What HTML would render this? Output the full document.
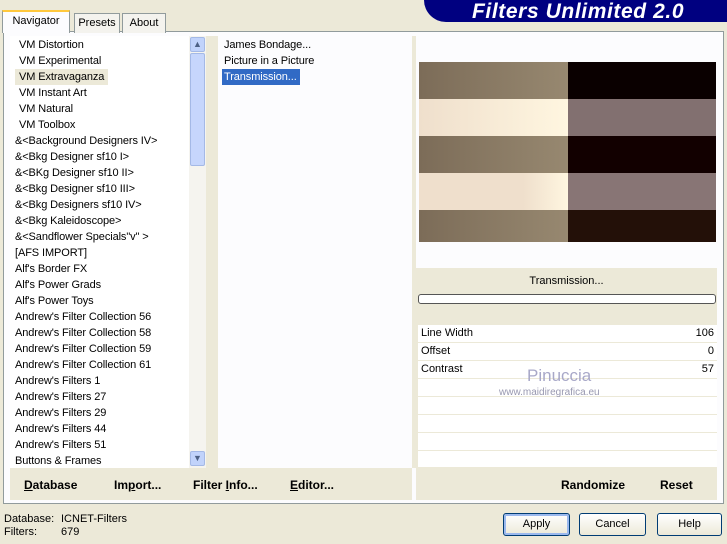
<!DOCTYPE html>
<html><head><style>
*{margin:0;padding:0;box-sizing:border-box}
body{width:727px;height:544px;background:#ece9d8;font-family:"Liberation Sans",sans-serif;font-size:11px;color:#000;position:relative;overflow:hidden}
.abs{position:absolute}
.tab{position:absolute;top:12px;height:20px;border:1px solid #919b9c;border-bottom:none;background:#f4f3ee;text-align:center;line-height:18px;font-size:11px}
.list div{height:16px;line-height:16px;white-space:nowrap;letter-spacing:-0.1px}
.row{position:absolute;left:418px;width:299px;height:17px;background:#fff;line-height:17px;padding:0 3px}
.btn{position:absolute;top:513px;height:23px;border:1px solid #003c74;border-radius:3px;background:linear-gradient(#fff,#ece9d8);text-align:center;line-height:21px;font-size:11px}
.bb{position:absolute;top:478px;font-weight:bold;font-size:12px}
</style></head><body>
<div class="abs" style="left:424px;top:0;width:303px;height:22px;background:#000080;border-bottom-left-radius:30px"></div>
<div class="abs" style="left:472px;top:0px;color:#fff;font-weight:bold;font-style:italic;font-size:21px;letter-spacing:0.6px">Filters Unlimited 2.0</div>
<div class="abs" style="left:3px;top:31px;width:721px;height:473px;background:#fcfcfe;border:1px solid #919b9c"></div>
<div class="tab" style="left:74px;width:46px;top:13px">Presets</div>
<div class="tab" style="left:122px;width:44px;top:13px">About</div>
<div class="tab" style="left:2px;width:68px;top:10px;height:23px;background:#fcfcfe;border-top:2px solid #ffc83c;line-height:19px">Navigator</div>
<div class="abs" style="left:10px;top:36px;width:196px;height:432px;background:#fff"></div>
<div class="abs list" style="left:15px;top:37px">
<div style="padding-left:4px">VM Distortion</div>
<div style="padding-left:4px">VM Experimental</div>
<div style="padding-left:4px;background:#ece9d8;width:93px">VM Extravaganza</div>
<div style="padding-left:4px">VM Instant Art</div>
<div style="padding-left:4px">VM Natural</div>
<div style="padding-left:4px">VM Toolbox</div>
<div>&amp;&lt;Background Designers IV&gt;</div>
<div>&amp;&lt;Bkg Designer sf10 I&gt;</div>
<div>&amp;&lt;BKg Designer sf10 II&gt;</div>
<div>&amp;&lt;Bkg Designer sf10 III&gt;</div>
<div>&amp;&lt;Bkg Designers sf10 IV&gt;</div>
<div>&amp;&lt;Bkg Kaleidoscope&gt;</div>
<div>&amp;&lt;Sandflower Specials"v" &gt;</div>
<div>[AFS IMPORT]</div>
<div>Alf's Border FX</div>
<div>Alf's Power Grads</div>
<div>Alf's Power Toys</div>
<div>Andrew's Filter Collection 56</div>
<div>Andrew's Filter Collection 58</div>
<div>Andrew's Filter Collection 59</div>
<div>Andrew's Filter Collection 61</div>
<div>Andrew's Filters 1</div>
<div>Andrew's Filters 27</div>
<div>Andrew's Filters 29</div>
<div>Andrew's Filters 44</div>
<div>Andrew's Filters 51</div>
<div>Buttons &amp; Frames</div>
</div>
<div class="abs" style="left:189px;top:36px;width:17px;height:432px;background:#f5f4ef"></div>
<div class="abs" style="left:190px;top:37px;width:15px;height:15px;background:#c1d3fb;border:1px solid #a4b9e6;border-radius:2px;text-align:center;font-size:9px;line-height:13px;color:#4d6185">&#9650;</div>
<div class="abs" style="left:190px;top:53px;width:15px;height:113px;background:#c6d6fc;border:1px solid #a4b9e6;border-radius:2px"></div>
<div class="abs" style="left:190px;top:451px;width:15px;height:15px;background:#c1d3fb;border:1px solid #a4b9e6;border-radius:2px;text-align:center;font-size:9px;line-height:13px;color:#4d6185">&#9660;</div>
<div class="abs" style="left:206px;top:36px;width:12px;height:432px;background:#ece9d8"></div>
<div class="abs list" style="left:222px;top:37px">
<div style="padding-left:2px">James Bondage...</div>
<div style="padding-left:2px">Picture in a Picture</div>
<div style="padding-left:2px;background:#316ac5;color:#fff;width:78px">Transmission...</div>
</div>
<div class="abs" style="left:412px;top:36px;width:4px;height:432px;background:#ece9d8"></div>
<div class="abs" style="left:419px;top:62px;width:149px;height:180px;background:
linear-gradient(to bottom,transparent 0 37px,#f0e2ce 37px 74px,transparent 74px 111px,#f0e2ce 111px 148px,transparent 148px),
linear-gradient(to right,#7c6c58,#978870)"></div>
<div class="abs" style="left:419px;top:99px;width:149px;height:37px;background:linear-gradient(to right,#efdfcc,#fff6e0)"></div>
<div class="abs" style="left:419px;top:173px;width:149px;height:37px;background:linear-gradient(to right,#efdfcc,#efdfcc 70%,#fff6e0)"></div>
<div class="abs" style="left:568px;top:62px;width:148px;height:180px;background:
linear-gradient(to bottom,#0a0000 0 37px,#827070 37px 74px,#120000 74px 111px,#887575 111px 148px,#231008 148px)"></div>
<div class="abs" style="left:416px;top:268px;width:301px;height:57px;background:#ece9d8"></div>
<div class="abs" style="left:416px;top:275px;width:301px;text-align:center">Transmission...</div>
<div class="abs" style="left:418px;top:294px;width:298px;height:10px;background:#fff;border:1px solid #555;border-radius:3px"></div>
<div class="abs" style="left:416px;top:325px;width:301px;height:142px;background:#ece9d8"></div>
<div class="row" style="top:325px">Line Width<span style="float:right">106</span></div>
<div class="row" style="top:343px">Offset<span style="float:right">0</span></div>
<div class="row" style="top:361px">Contrast<span style="float:right">57</span></div>
<div class="row" style="top:379px"></div>
<div class="row" style="top:397px"></div>
<div class="row" style="top:415px"></div>
<div class="row" style="top:433px"></div>
<div class="row" style="top:451px;height:16px"></div>
<div class="abs" style="left:527px;top:366px;color:#a8a8c8;font-size:17px">Pinuccia</div>
<div class="abs" style="left:499px;top:387px;color:#9898b0;font-size:10px">www.maidiregrafica.eu</div>
<div class="abs" style="left:10px;top:468px;width:402px;height:32px;background:#ece9d8"></div>
<div class="abs" style="left:416px;top:467px;width:301px;height:33px;background:#ece9d8"></div>
<div class="bb" style="left:24px"><u>D</u>atabase</div>
<div class="bb" style="left:114px">Im<u>p</u>ort...</div>
<div class="bb" style="left:193px">Filter <u>I</u>nfo...</div>
<div class="bb" style="left:290px"><u>E</u>ditor...</div>
<div class="bb" style="left:561px">Randomize</div>
<div class="bb" style="left:660px">Reset</div>
<div class="abs" style="left:4px;top:513px;line-height:13px">Database:<br>Filters:</div>
<div class="abs" style="left:61px;top:513px;line-height:13px">ICNET-Filters<br>679</div>
<div class="btn" style="left:503px;width:67px;box-shadow:inset 0 0 0 2px #9bb9ee">Apply</div>
<div class="btn" style="left:579px;width:67px">Cancel</div>
<div class="btn" style="left:657px;width:65px">Help</div>
</body></html>
